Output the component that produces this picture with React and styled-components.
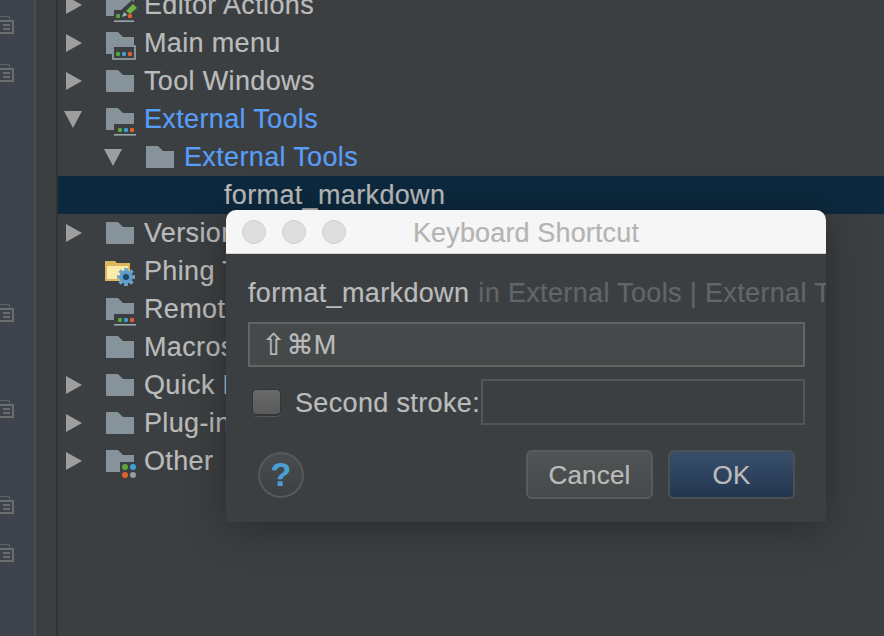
import React from "react";
import styled, { createGlobalStyle } from "styled-components";

const GREEN = "#59a83a";
const BLUE = "#3ea0d4";
const ORANGE = "#e0622b";
const PANEL = "#3c3f41";

const GlobalStyle = createGlobalStyle`
  html, body {
    margin: 0;
    padding: 0;
    width: 884px;
    height: 636px;
    overflow: hidden;
    background: ${PANEL};
    font-family: "Liberation Sans", "DejaVu Sans", sans-serif;
  }
  * { box-sizing: border-box; }
`;

const FOLDER = "M0 0H12L17 5H28V22H0Z";

const Dots = ({ x, y }) => (
  <>
    <circle cx={x} cy={y} r="2.2" fill={GREEN} />
    <circle cx={x + 6} cy={y} r="2.2" fill={BLUE} />
    <circle cx={x + 12} cy={y} r="2.2" fill={ORANGE} />
  </>
);

const Badges = {
  menu: () => (
    <>
      <rect x="6" y="13" width="24" height="15" fill={PANEL} />
      <rect x="7" y="14" width="22" height="13" fill="none" stroke="#9aa7ad" strokeWidth="1.6" />
      <Dots x={12} y={22} />
    </>
  ),
  tools: () => (
    <>
      <rect x="8" y="16" width="24" height="14" fill={PANEL} />
      <Dots x={14} y={22} />
      <rect x="8" y="26" width="22" height="1.6" fill="#9aa7ad" />
    </>
  ),
  editor: () => (
    <>
      <rect x="8" y="16" width="22" height="14" fill={PANEL} />
      <path d="M14 17L26 6L34 14L22 25Z" fill={PANEL} />
      <path d="M20 17L27 10L31 14L24 20Z" fill="#6cb33f" />
      <path d="M16 23L18 18L21.5 21Z" fill="#a9b4ba" />
      <circle cx="12" cy="22" r="2.2" fill={GREEN} />
      <circle cx="24" cy="22" r="2.2" fill={ORANGE} />
      <rect x="8" y="26.4" width="20" height="1.6" fill="#9aa7ad" />
    </>
  ),
  other: () => (
    <>
      <rect x="14" y="12" width="18" height="18" fill={PANEL} />
      <circle cx="19" cy="17" r="3" fill={GREEN} />
      <circle cx="27" cy="17" r="3" fill={BLUE} />
      <circle cx="19" cy="25" r="3" fill={ORANGE} />
      <circle cx="27" cy="25" r="3" fill="#9a9c9e" />
    </>
  ),
};

const IconSvg = styled.svg`
  flex: none;
  align-self: flex-start;
  margin-top: 8px;
  overflow: visible;
  display: block;
`;

const FolderIcon = ({ badge }) => {
  const Badge = Badges[badge];
  return (
    <IconSvg width="32" height="30" viewBox="0 0 32 30">
      <path d={FOLDER} fill="#87939a" />
      {Badge && <Badge />}
    </IconSvg>
  );
};

const PhingIcon = () => (
  <IconSvg width="32" height="30" viewBox="0 0 32 30">
    <path d="M-1 1H9L11 3H24V21H-1Z" fill="#dcb75e" />
    <path d="M1 6H22V19H1Z" fill="#fbeaa9" />
    <g transform="translate(20 17)">
      <g stroke="#6ea6d0" strokeWidth="3.6">
        <path d="M0 -9V9" />
        <path d="M-9 0H9" />
        <path d="M-6.4 -6.4L6.4 6.4" />
        <path d="M-6.4 6.4L6.4 -6.4" />
      </g>
      <circle r="6.6" fill="#5f9cc8" />
      <circle r="3" fill="#1d4662" />
    </g>
  </IconSvg>
);

const Page = styled.div`
  position: relative;
  width: 884px;
  height: 636px;
  overflow: hidden;
  display: flex;
  background: ${PANEL};
  -webkit-text-stroke: 0.2px;
`;

const Gutter = styled.div`
  flex: none;
  width: 36px;
  padding-top: 16px;
  background: #3e434c;
  border-right: 2px solid #4b4a4c;
  overflow: hidden;
  display: grid;
  grid-auto-rows: 48px;
`;

const GutterCell = styled.div`
  height: 48px;
`;

const Strip = styled.div`
  flex: none;
  width: 22px;
  background: ${PANEL};
  border-right: 2px solid #323232;
`;

const Tree = styled.div`
  flex: 1;
  margin-top: -14px;
  min-width: 0;
`;

const Row = styled.div`
  height: 38px;
  display: flex;
  align-items: center;
  padding-left: ${(p) => 8 + p.$depth * 40}px;
  background: ${(p) => (p.$selected ? "#0d293e" : "transparent")};
  color: ${(p) => (p.$link ? "#589df6" : "#bbbbbb")};
  font-size: 27px;
  letter-spacing: 0.35px;
  white-space: nowrap;
`;

const ArrowSlot = styled.div`
  flex: none;
  width: 40px;
  height: 18px;
  display: flex;
  align-items: center;
`;

const Arrow = styled.div`
  width: 0;
  height: 0;
  ${(p) =>
    p.$open
      ? `
    margin-left: -2px;
    border-left: 9px solid transparent;
    border-right: 9px solid transparent;
    border-top: 17px solid #9e9e9e;
  `
      : `
    border-top: 9px solid transparent;
    border-bottom: 9px solid transparent;
    border-left: 16px solid #9e9e9e;
  `}
`;

const IconSlot = styled.div`
  flex: none;
  width: 38px;
  height: 38px;
  display: flex;
`;

const Dialog = styled.div`
  position: absolute;
  left: 226px;
  top: 210px;
  width: 600px;
  height: 312px;
  border-radius: 10px 10px 0 0;
  overflow: hidden;
  background: ${PANEL};
  display: flex;
  flex-direction: column;
`;

const DialogShadow = styled.div`
  position: absolute;
  left: 226px;
  top: 210px;
  width: 600px;
  height: 312px;
  border-radius: 10px 10px 0 0;
  box-shadow: 0 6px 44px rgba(0, 0, 0, 0.32);
`;

const TitleBar = styled.div`
  flex: none;
  height: 44px;
  background: #f6f6f6;
  border-bottom: 1px solid #d2d2d2;
  display: grid;
  grid-template-columns: 1fr auto 1fr;
  align-items: center;
  padding: 0 16px;
  color: #b4b4b4;
  font-size: 27px;
  letter-spacing: 0.15px;
`;

const TitleText = styled.span`
  padding-top: 3px;
`;

const Lights = styled.div`
  display: flex;
  gap: 16px;
`;

const Light = styled.span`
  width: 24px;
  height: 24px;
  border-radius: 50%;
  background: #dedede;
  border: 1px solid #d0d0d0;
`;

const Body = styled.div`
  flex: 1;
  padding: 0 21px 0 22px;
  display: flex;
  flex-direction: column;
`;

const Heading = styled.div`
  height: 68px;
  width: 600px;
  padding-top: 10px;
  display: flex;
  align-items: center;
  font-size: 27px;
  letter-spacing: 0.35px;
  white-space: nowrap;
  color: #bbbbbb;
`;

const Dim = styled.span`
  color: #636567;
  margin-left: 9px;
`;

const ShortcutField = styled.div`
  height: 45px;
  background: #45494a;
  border: 2px solid #646464;
  display: flex;
  align-items: center;
  padding: 1px 0 0 11px;
  color: #bbbbbb;
  font-size: 27px;
  letter-spacing: 0.35px;
`;

const ShiftGlyph = styled.span`
  font-size: 30px;
  line-height: 30px;
`;

const StrokeRow = styled.div`
  margin-top: 12px;
  height: 46px;
  display: flex;
  align-items: center;
  padding-left: 4px;
  color: #bbbbbb;
  font-size: 27px;
  letter-spacing: 0.35px;
`;

const StrokeLabel = styled.span`
  padding-top: 2px;
`;

const Checkbox = styled.span`
  flex: none;
  width: 29px;
  height: 27px;
  border-radius: 5px;
  background: linear-gradient(#6a6a6a, #5a5a5a);
  border: 1px solid #333537;
  border-bottom-width: 2px;
  box-shadow: 0 1px 0 #55585a;
  margin-right: 14px;
`;

const StrokeField = styled.div`
  flex: none;
  width: 324px;
  height: 46px;
  margin-left: auto;
  border: 2px solid #545556;
`;

const Footer = styled.div`
  margin-top: 25px;
  margin-right: 10px;
  display: flex;
  align-items: center;
  padding-left: 10px;
`;

const Help = styled.div`
  width: 46px;
  height: 46px;
  border-radius: 50%;
  border: 2px solid #55595a;
  background: linear-gradient(#484c4e, #3d4042);
  color: #4a9fd4;
  font-size: 34px;
  font-weight: 700;
  display: flex;
  align-items: center;
  justify-content: center;
  margin-right: auto;
`;

const Button = styled.div`
  width: 127px;
  height: 49px;
  padding-top: 2px;
  border-radius: 6px;
  margin-left: ${(p) => (p.$primary ? "15px" : "0")};
  border: 2px solid ${(p) => (p.$primary ? "#4a5054" : "#585b5d")};
  background: ${(p) =>
    p.$primary
      ? "linear-gradient(#384f6b, #233650)"
      : "linear-gradient(#505455, #45494a)"};
  color: #bbbbbb;
  font-size: 26px;
  letter-spacing: 0.2px;
  display: flex;
  align-items: center;
  justify-content: center;
`;

const GutterGlyph = () => (
  <svg width="14" height="18" viewBox="0 0 14 18" style={{ display: "block" }}>
    <path d="M0 .5H9.5V4" fill="none" stroke="#56646c" strokeWidth="1" />
    <rect x="-2" y="5" width="15" height="12" fill="none" stroke="#6b6d6f" strokeWidth="2" />
    <path d="M3 9H10M3 13H10" stroke="#6b6d6f" strokeWidth="2" />
  </svg>
);

const gutterMarks = [0, 1, 6, 8, 10, 11];

const rows = [
  { label: "Editor Actions", arrow: "closed", badge: "editor" },
  { label: "Main menu", arrow: "closed", badge: "menu" },
  { label: "Tool Windows", arrow: "closed" },
  { label: "External Tools", arrow: "open", badge: "tools", link: true },
  { label: "External Tools", arrow: "open", depth: 1, link: true },
  { label: "format_markdown", leaf: true, depth: 2, selected: true },
  { label: "Version Control Systems", arrow: "closed" },
  { label: "Phing Targets", phing: true },
  { label: "Remote External Tools", badge: "tools" },
  { label: "Macros" },
  { label: "Quick Lists", arrow: "closed" },
  { label: "Plug-ins", arrow: "closed" },
  { label: "Other", arrow: "closed", badge: "other" },
];

const TreeRow = ({ row }) => (
  <Row $depth={row.depth || 0} $link={row.link} $selected={row.selected}>
    <ArrowSlot>{row.arrow && <Arrow $open={row.arrow === "open"} />}</ArrowSlot>
    <IconSlot>
      {row.phing && <PhingIcon />}
      {!row.phing && !row.leaf && <FolderIcon badge={row.badge} />}
    </IconSlot>
    {row.label}
  </Row>
);

export default function App() {
  return (
    <Page>
      <GlobalStyle />
      <Gutter>
        {Array.from({ length: 12 }, (_, i) => (
          <GutterCell key={i}>{gutterMarks.includes(i) && <GutterGlyph />}</GutterCell>
        ))}
      </Gutter>
      <Strip />
      <Tree>
        {rows.map((row, i) => (
          <TreeRow key={i} row={row} />
        ))}
      </Tree>
      <DialogShadow />
      <Dialog>
        <TitleBar>
          <Lights>
            <Light />
            <Light />
            <Light />
          </Lights>
          <TitleText>Keyboard Shortcut</TitleText>
        </TitleBar>
        <Body>
          <Heading>
            format_markdown<Dim>in External Tools | External Tools</Dim>
          </Heading>
          <ShortcutField>
            <ShiftGlyph>⇧</ShiftGlyph>⌘M
          </ShortcutField>
          <StrokeRow>
            <Checkbox />
            <StrokeLabel>Second stroke:</StrokeLabel>
            <StrokeField />
          </StrokeRow>
          <Footer>
            <Help>?</Help>
            <Button>Cancel</Button>
            <Button $primary>OK</Button>
          </Footer>
        </Body>
      </Dialog>
    </Page>
  );
}
